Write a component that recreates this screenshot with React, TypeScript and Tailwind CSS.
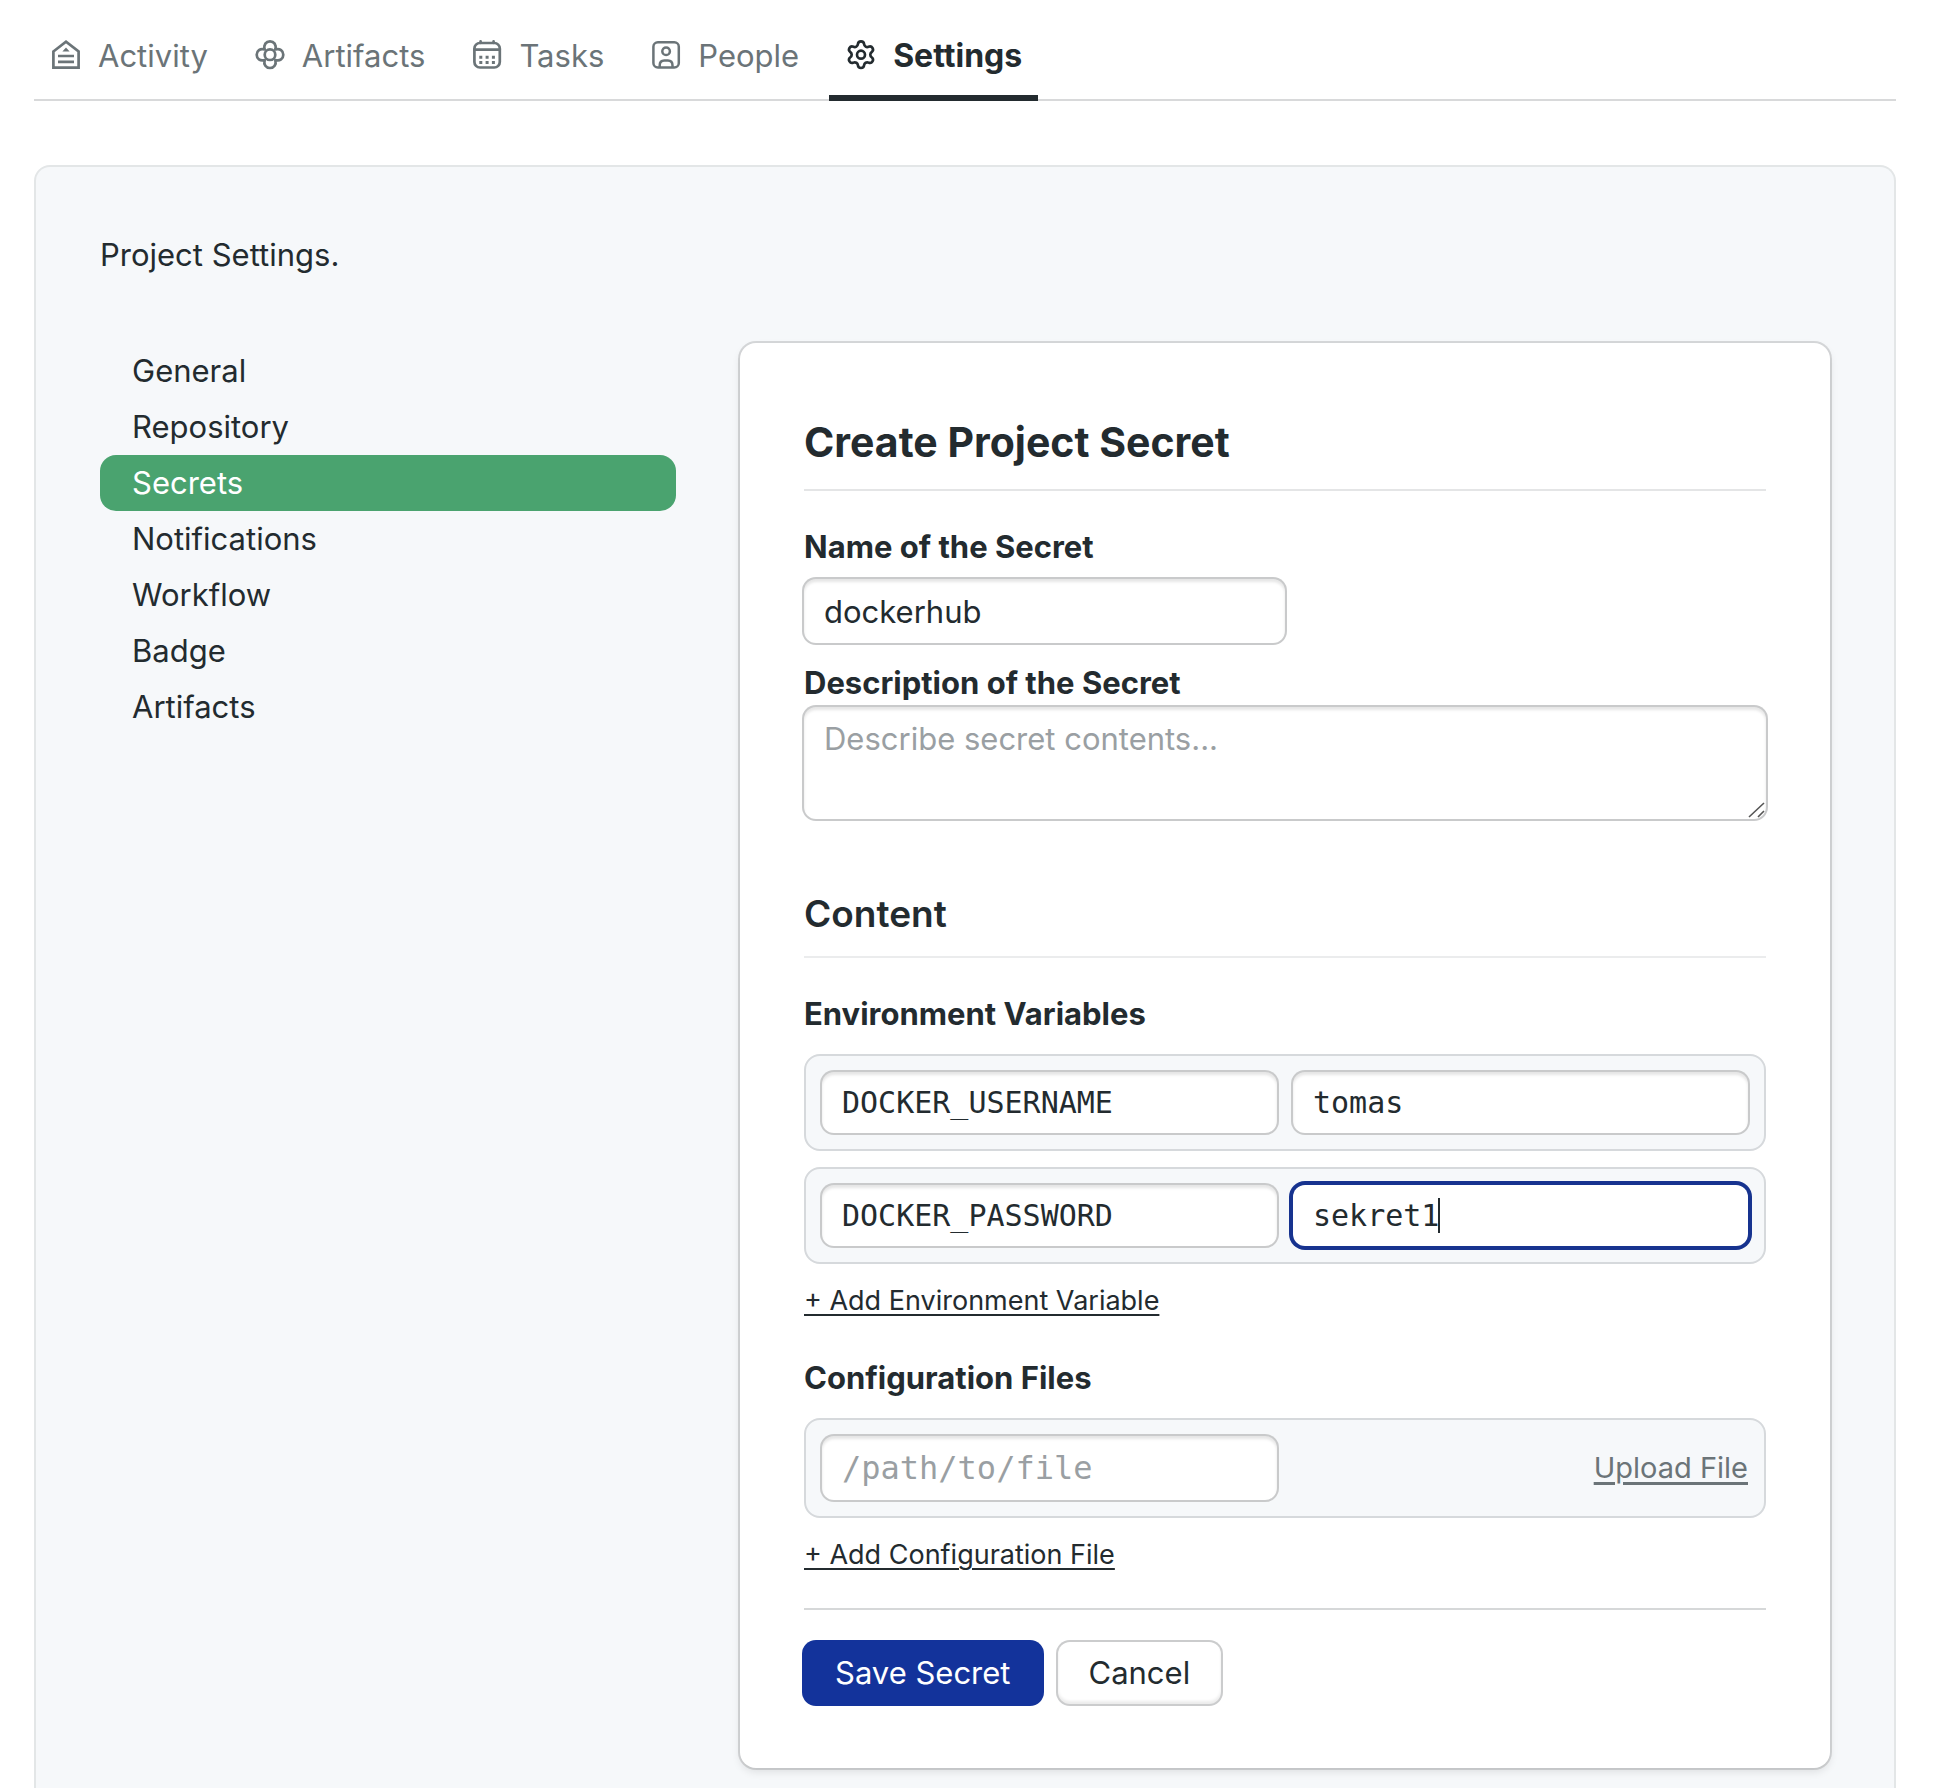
import React from "react";

const tab = "mt-5 mb-[3px] flex h-[72px] items-center gap-4 px-4 leading-[48px]";

function ActivityIcon() {
  return (
    <svg viewBox="0 0 32 32" className="size-8 shrink-0" fill="none" stroke="currentColor" strokeWidth="2.7" aria-hidden="true">
      <path d="M3.400 11.500 16 1.800 28.600 11.500V27.600H3.400Z" />
      <path d="M8 16h16M8 21.800h16" />
      <path d="M12.400 11.600 16 7.600l3.600 4Z" fill="currentColor" stroke="none" />
    </svg>
  );
}

function ArtifactsIcon() {
  return (
    <svg viewBox="0 0 32 32" className="size-8 shrink-0" fill="none" stroke="currentColor" strokeWidth="2.7" strokeLinejoin="round" aria-hidden="true">
      <g transform="translate(16 14.700)">
        <circle r="5.300" />
        <path d="M-5.300-5.300C-6.600-10-4-13.300 0-13.300S6.600-10 5.300-5.300C10-6.600 13.300-4 13.300 0S10 6.600 5.300 5.300C6.600 10 4 13.300 0 13.300S-6.600 10-5.300 5.300C-10 6.600-13.300 4-13.300 0S-10-6.600-5.300-5.300Z" />
      </g>
    </svg>
  );
}

function TasksIcon() {
  return (
    <svg viewBox="0 0 32 32" className="size-8 shrink-0" fill="none" stroke="currentColor" strokeWidth="2.7" strokeLinecap="round" aria-hidden="true">
      <rect x="3.400" y="3" width="25.400" height="24.500" rx="5.500" />
      <path d="M3.400 9.600h25.400M9.600 1.400v1.400M22.600 1.400v1.400" />
      <path d="M8.300 17.200h3M14.600 17.200h3M20.900 17.200h3M8.300 22.400h3M14.600 22.400h3M20.900 22.400h3" strokeWidth="3" strokeLinecap="butt" />
    </svg>
  );
}

function PeopleIcon() {
  return (
    <svg viewBox="0 0 32 32" className="size-8 shrink-0" fill="none" stroke="currentColor" strokeWidth="2.5" aria-hidden="true">
      <rect x="3.400" y="2.300" width="25.400" height="25.200" rx="4.500" />
      <circle cx="16.100" cy="11.300" r="3.800" />
      <path d="M9.700 27.200v-1.600c0-3 1.800-5 4.600-5h3.600c2.800 0 4.600 2 4.600 5v1.600" />
    </svg>
  );
}

function SettingsIcon() {
  return (
    <svg viewBox="0 1 24 24" className="size-8 shrink-0" fill="none" stroke="currentColor" strokeWidth="2" strokeLinecap="round" strokeLinejoin="round" aria-hidden="true">
      <path d="M9.671 4.136a2.340 2.340 0 0 1 4.659 0 2.340 2.340 0 0 0 3.319 1.915 2.340 2.340 0 0 1 2.330 4.033 2.340 2.340 0 0 0 0 3.831 2.340 2.340 0 0 1-2.330 4.033 2.340 2.340 0 0 0-3.319 1.915 2.340 2.340 0 0 1-4.659 0 2.340 2.340 0 0 0-3.320-1.915 2.340 2.340 0 0 1-2.330-4.033 2.340 2.340 0 0 0 0-3.831A2.340 2.340 0 0 1 6.350 6.051a2.340 2.340 0 0 0 3.319-1.915" />
      <circle cx="12" cy="12" r="3" />
    </svg>
  );
}

const tabs = [
  { label: "Activity", Icon: ActivityIcon },
  { label: "Artifacts", Icon: ArtifactsIcon },
  { label: "Tasks", Icon: TasksIcon },
  { label: "People", Icon: PeopleIcon },
];

const sections = ["General", "Repository", "Secrets", "Notifications", "Workflow", "Badge", "Artifacts"];

const field =
  "block w-full min-w-0 rounded-xl bg-white px-5 outline-none placeholder:text-[#9a9fa3] shadow-[0_0_0_2px_#c9cacb,inset_0_3px_3px_rgba(0,0,0,0.1)]";
const mono = "font-['DejaVu_Sans_Mono',monospace]";
const row = "grid grid-cols-2 items-center gap-4 rounded-2xl border-2 border-[#d6d9dc] bg-[#f6f8fa] p-4";
const label = "block leading-[48px] font-bold";
const addLink = "mt-4 block text-[27px] leading-[42px] underline decoration-2 underline-offset-4";

export default function App() {
  return (
    <div className="flex min-h-screen flex-col bg-white pr-[42px] pl-[34px] font-['Inter',sans-serif] text-[#232b2f]">
      <nav className="flex gap-[14px] border-b-2 border-[#d8d9da]" aria-label="Project">
        {tabs.map(({ label, Icon }) => (
          <a key={label} href="#" className={`${tab} text-[31px] text-[#6b7478]`}>
            <Icon />
            <span>{label}</span>
          </a>
        ))}
        <a href="#" aria-current="page" className="-mb-0.5 flex border-b-[6px] border-[#232b2f]">
          <span className={`${tab} -mb-px text-[32px] font-bold`}>
            <SettingsIcon />
            <span>Settings</span>
          </span>
        </a>
      </nav>

      <main className="mt-16 flex-1 rounded-t-2xl border-2 border-b-0 border-[#e3e6e7] bg-[#f6f8fa] px-16 pt-16 pb-4 text-[31px] leading-[48px]">
        <p>Project Settings.</p>
        <div className="mt-16 grid grid-cols-[576fr_1090fr] items-start gap-16">
          <nav aria-label="Settings">
            {sections.map((name) => (
              <a
                key={name}
                href="#"
                aria-current={name === "Secrets" ? "true" : undefined}
                className={
                  name === "Secrets"
                    ? "block rounded-2xl bg-[#4aa36f] px-8 leading-[56px] text-white"
                    : "block px-8 leading-[56px]"
                }
              >
                {name}
              </a>
            ))}
          </nav>

          <form
            className="min-w-0 rounded-2xl bg-white p-16 shadow-[0_0_0_2px_rgba(0,0,0,0.13),0_4px_8px_rgba(0,0,0,0.1)]"
            onSubmit={(e) => e.preventDefault()}
          >
            <h1 className="border-b-2 border-[#e4e5e6] pb-3 text-[41px] leading-[70px] font-bold">Create Project Secret</h1>

            <label htmlFor="name" className={`${label} mt-8`}>
              Name of the Secret
            </label>
            <input id="name" defaultValue="dockerhub" className={`${field} mt-2 h-16 max-w-[481px]`} />

            <label htmlFor="description" className={`${label} mt-4`}>
              Description of the Secret
            </label>
            <div className="relative">
              <textarea
                id="description"
                placeholder="Describe secret contents..."
                className={`${field} h-28 resize-y pt-2 [&::-webkit-resizer]:hidden`}
              />
              <svg viewBox="0 0 20 20" className="pointer-events-none absolute right-0 bottom-0 size-5" stroke="#555" strokeWidth="1.600" aria-hidden="true">
                <path d="M3 18 18 4M12 18l6-6" />
              </svg>
            </div>

            <h2 className="mt-16 border-b-2 border-[#ebeced] pb-3 text-[37px] leading-[61px] font-semibold">Content</h2>

            <h3 className={`${label} mt-8`}>Environment Variables</h3>
            <div className="mt-4 flex flex-col gap-4">
              <div className={row}>
                <input aria-label="Variable name" defaultValue="DOCKER_USERNAME" className={`${field} ${mono} h-[61px] text-[30px]`} />
                <input aria-label="Variable value" defaultValue="tomas" className={`${field} ${mono} h-[61px] text-[30px]`} />
              </div>
              <div className={row}>
                <input aria-label="Variable name" defaultValue="DOCKER_PASSWORD" className={`${field} ${mono} h-[61px] text-[30px]`} />
                <div className="relative">
                  <input
                    aria-label="Variable value"
                    defaultValue="sekret1"
                    className={`${mono} block h-[61px] w-full rounded-xl bg-white px-5 text-[30px] caret-transparent shadow-[0_0_0_4px_#17338f] outline-none`}
                  />
                  <span className="absolute top-[13px] left-[145px] h-[35px] w-0.5 bg-[#232b2f]" />
                </div>
              </div>
            </div>
            <button type="button" className={addLink}>
              + Add Environment Variable
            </button>

            <h3 className={`${label} mt-8`}>Configuration Files</h3>
            <div className={`${row} mt-4`}>
              <input aria-label="File path" placeholder="/path/to/file" className={`${field} ${mono} h-16 text-[32px]`} />
              <button type="button" className="justify-self-end text-[29px] text-[#6b7478] underline decoration-[3px] underline-offset-4">
                Upload File
              </button>
            </div>
            <button type="button" className={addLink}>
              + Add Configuration File
            </button>

            <div className="mt-8 flex gap-4 border-t-2 border-[#d6d8d9] pt-8">
              <button type="submit" className="h-[62px] rounded-xl bg-[#13339b] px-[31px] text-white shadow-[0_0_0_2px_#13339b]">
                Save Secret
              </button>
              <button
                type="button"
                className="h-[62px] rounded-xl bg-white px-[31px] shadow-[0_0_0_2px_#cbcccd,inset_0_-3px_3px_rgba(0,0,0,0.08)]"
              >
                Cancel
              </button>
            </div>
          </form>
        </div>
      </main>
    </div>
  );
}
